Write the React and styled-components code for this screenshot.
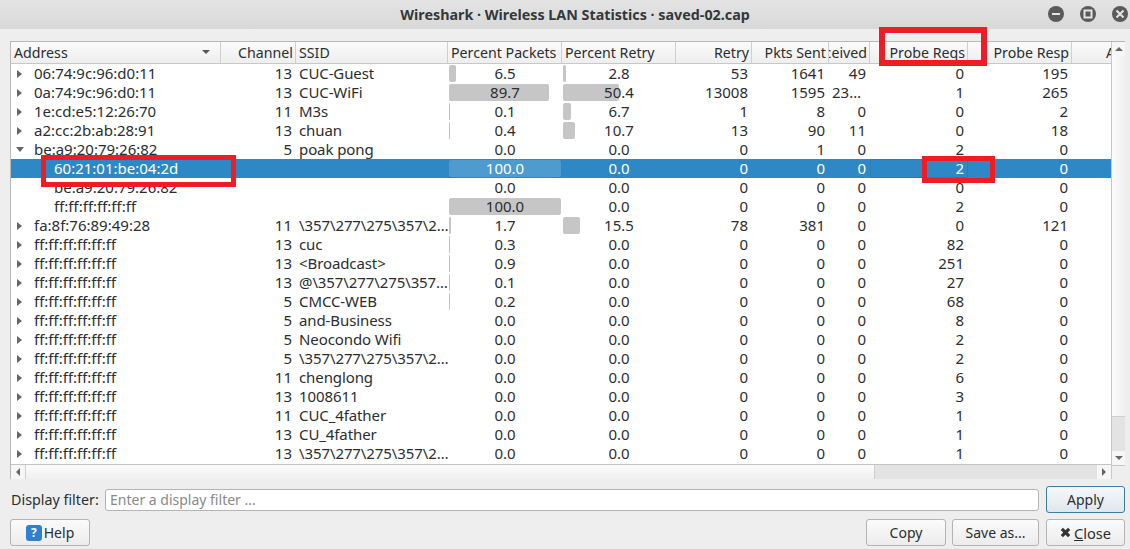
import React from 'react'
import styled, { createGlobalStyle } from 'styled-components'

const GRID = '210px 75px 152px 114px 114px 76px 77px 41px 98px 104px 39px'

const GlobalStyle = createGlobalStyle`
  html, body { margin: 0; padding: 0; background: #eeeeee; }
  body { font-family: "Noto Sans", "Open Sans", sans-serif; font-size: 14px; color: #2b2e30; overflow: hidden; }
`

const Win = styled.div`
  position: relative;
  width: 1130px;
  height: 549px;
  overflow: hidden;
  background: #eeeeee;
`

const TitleBar = styled.div`
  position: relative;
  height: 29px;
  display: flex;
  align-items: center;
  justify-content: center;
  padding-left: 20px;
  box-sizing: border-box;
  background: linear-gradient(#e4e4e4, #d8d8d8);
  font-weight: 700;
  font-size: 14.3px;
  color: #33383a;
`

const WinButtons = styled.div`
  position: absolute;
  top: 5px;
  right: 1px;
  display: flex;
  gap: 14px;
`

const Content = styled.div`
  padding: 12px 5px 0 10px;
`

const Table = styled.div`
  display: grid;
  grid-template-columns: 1100px 14px;
  grid-template-rows: 423px 14px;
  border: 1px solid #b8b8b8;
  background: #fff;
  box-sizing: border-box;
  height: 438px;
`

const Main = styled.div`
  overflow: hidden;
  border-bottom: 1px solid #c4c4c4;
`

const Header = styled.div`
  display: grid;
  grid-template-columns: ${GRID};
  height: 21px;
  background: linear-gradient(#fbfbfb, #eeeeee);
  border-bottom: 1px solid #c8c8c8;
  font-size: 14.2px;
`

const HCell = styled.div`
  position: relative;
  display: flex;
  align-items: center;
  justify-content: ${p => p.$align === 'right' ? 'flex-end' : 'flex-start'};
  padding: 0 2px 0 3px;
  overflow: hidden;
  white-space: nowrap;
  border-right: 1px solid #cfcfcf;
  min-width: 0;
`

const ClippedHCell = styled(HCell)`
  padding-left: 34px;
  border-right: none;
`

const SortArrow = styled.span`
  position: absolute;
  right: 10px;
  top: 8px;
  border-left: 4px solid transparent;
  border-right: 4px solid transparent;
  border-top: 4px solid #555;
`

const Row = styled.div`
  display: grid;
  grid-template-columns: ${GRID};
  height: 19px;
  line-height: 19px;
  font-size: 15px;
  background: ${p => p.$selected ? '#2e88c5' : '#fff'};
  color: ${p => p.$selected ? '#fff' : '#2b2e30'};
`

const Cell = styled.div`
  position: relative;
  padding: 0 4px 0 3px;
  overflow: hidden;
  white-space: nowrap;
  text-align: ${p => p.$align || 'left'};
  min-width: 0;
`

const AddressCell = styled(Cell)`
  padding-left: ${p => p.$child ? '43px' : '23px'};
`

const SsidCell = styled(Cell)`
  padding-right: 0;
  letter-spacing: -0.1px;
`

const Expander = styled.span`
  position: absolute;
  left: 6px;
  top: 6px;
  width: 0;
  height: 0;
  ${p => p.$open
    ? 'border-left: 4px solid transparent; border-right: 4px solid transparent; border-top: 5px solid #666; top: 7px; left: 5px;'
    : 'border-top: 4px solid transparent; border-bottom: 4px solid transparent; border-left: 5px solid #666;'}
`

const BarCell = styled(Cell)`
  padding: 0;
  text-align: center;
`

const Bar = styled.div`
  position: absolute;
  left: 1px;
  top: 1px;
  bottom: 1px;
  border-radius: 2px;
  background: ${p => p.$selected ? '#4e9bcf' : '#c6c6c6'};
`

const BarLabel = styled.span`
  position: relative;
`

const FocusCell = styled(Cell)`
  box-shadow: inset 0 0 0 1px #2a7db6;
`

const VBar = styled.div`
  display: flex;
  flex-direction: column;
  border-left: 1px solid #c8c8c8;
  background: #e3e3e3;
`

const VThumb = styled.div`
  height: 360px;
  background: linear-gradient(90deg, #fbfbfb, #f0f0f0);
  border-bottom: 1px solid #cfcfcf;
`

const Spacer = styled.div`
  flex: 1;
`

const ArrowBox = styled.div`
  display: flex;
  align-items: center;
  justify-content: center;
  height: 14px;
  width: ${p => p.$w || 'auto'};
  flex: none;
  background: #f6f6f6;
`

const Tri = styled.span`
  width: 0;
  height: 0;
  ${p => p.$dir === 'up' && 'border-left: 4px solid transparent; border-right: 4px solid transparent; border-bottom: 4px solid #666;'}
  ${p => p.$dir === 'down' && 'border-left: 4px solid transparent; border-right: 4px solid transparent; border-top: 4px solid #666;'}
  ${p => p.$dir === 'left' && 'border-top: 4px solid transparent; border-bottom: 4px solid transparent; border-right: 4px solid #666;'}
  ${p => p.$dir === 'right' && 'border-top: 4px solid transparent; border-bottom: 4px solid transparent; border-left: 4px solid #666;'}
`

const HBar = styled.div`
  display: flex;
  background: #e3e3e3;
`

const HThumb = styled.div`
  width: 848px;
  background: linear-gradient(#fbfbfb, #f0f0f0);
  border-left: 1px solid #cfcfcf;
  border-right: 1px solid #cfcfcf;
`

const Corner = styled.div`
  background: #eeeeee;
  border-left: 1px solid #c8c8c8;
  border-top: 1px solid #c8c8c8;
`

const FilterRow = styled.div`
  display: flex;
  align-items: center;
  height: 27px;
  margin-top: 7px;
  padding-left: 1px;
`

const FilterLabel = styled.label`
  width: 94px;
  flex: none;
  font-size: 14.3px;
`

const FilterInput = styled.input`
  width: 934px;
  height: 22px;
  box-sizing: border-box;
  border: 1px solid #b4b4b4;
  border-radius: 3px;
  background: #fff;
  padding: 0 4px;
  margin-right: 7px;
  font: inherit;
  outline: none;
  &::placeholder { color: #8a8a8a; opacity: 1; }
`

const Button = styled.button`
  width: ${p => p.$w}px;
  height: 27px;
  box-sizing: border-box;
  flex: none;
  display: inline-flex;
  align-items: center;
  justify-content: center;
  gap: 2px;
  padding: 0;
  font: inherit;
  color: #2b2e30;
  border: 1px solid ${p => p.$primary ? '#3a7ea8' : '#b4b4b4'};
  border-radius: 3px;
  background: ${p => p.$primary ? 'linear-gradient(#f6f8f9, #dfe7ec)' : 'linear-gradient(#fbfbfb, #ececec)'};
`

const CloseButton = styled(Button)`
  margin-left: 1px;
  gap: 3px;
  font-size: 14.6px;
`

const Footer = styled.div`
  display: flex;
  margin-top: 6px;
`

const FooterRight = styled.div`
  margin-left: auto;
  display: flex;
  gap: 6px;
`

const HelpIcon = styled.span`
  width: 16px;
  height: 16px;
  border-radius: 3px;
  background: #2f80d0;
  color: #fff;
  font-weight: 700;
  font-size: 12px;
  line-height: 16px;
  text-align: center;
`

const Mnemonic = styled.span`
  text-decoration: underline;
`

const RedBox = styled.div`
  position: absolute;
  left: ${p => p.$x}px;
  top: ${p => p.$y}px;
  width: ${p => p.$w}px;
  height: ${p => p.$h}px;
  box-sizing: border-box;
  border: ${p => p.$t || 5}px solid #ee1c25;
  pointer-events: none;
`

const rows = [
  { a: '06:74:9c:96:d0:11', c: '13', s: 'CUC-Guest', p: 6.5, r: 2.8, v: ['53', '1641', '49', '0', '195'], kids: 'closed' },
  { a: '0a:74:9c:96:d0:11', c: '13', s: 'CUC-WiFi', p: 89.7, r: 50.4, v: ['13008', '1595', '23…', '1', '265'], kids: 'closed' },
  { a: '1e:cd:e5:12:26:70', c: '11', s: 'M3s', p: 0.1, r: 6.7, v: ['1', '8', '0', '0', '2'], kids: 'closed' },
  { a: 'a2:cc:2b:ab:28:91', c: '13', s: 'chuan', p: 0.4, r: 10.7, v: ['13', '90', '11', '0', '18'], kids: 'closed' },
  { a: 'be:a9:20:79:26:82', c: '5', s: 'poak pong', p: 0, r: 0, v: ['0', '1', '0', '2', '0'], kids: 'open' },
  { a: '60:21:01:be:04:2d', child: true, selected: true, p: 100, r: 0, v: ['0', '0', '0', '2', '0'] },
  { a: 'be:a9:20:79:26:82', child: true, p: 0, r: 0, v: ['0', '0', '0', '0', '0'] },
  { a: 'ff:ff:ff:ff:ff:ff', child: true, p: 100, r: 0, v: ['0', '0', '0', '2', '0'] },
  { a: 'fa:8f:76:89:49:28', c: '11', s: '\\357\\277\\275\\357\\2…', p: 1.7, r: 15.5, v: ['78', '381', '0', '0', '121'], kids: 'closed' },
  { a: 'ff:ff:ff:ff:ff:ff', c: '13', s: 'cuc', p: 0.3, r: 0, v: ['0', '0', '0', '82', '0'], kids: 'closed' },
  { a: 'ff:ff:ff:ff:ff:ff', c: '13', s: '<Broadcast>', p: 0.9, r: 0, v: ['0', '0', '0', '251', '0'], kids: 'closed' },
  { a: 'ff:ff:ff:ff:ff:ff', c: '13', s: '@\\357\\277\\275\\357…', p: 0.1, r: 0, v: ['0', '0', '0', '27', '0'], kids: 'closed' },
  { a: 'ff:ff:ff:ff:ff:ff', c: '5', s: 'CMCC-WEB', p: 0.2, r: 0, v: ['0', '0', '0', '68', '0'], kids: 'closed' },
  { a: 'ff:ff:ff:ff:ff:ff', c: '5', s: 'and-Business', p: 0, r: 0, v: ['0', '0', '0', '8', '0'], kids: 'closed' },
  { a: 'ff:ff:ff:ff:ff:ff', c: '5', s: 'Neocondo Wifi', p: 0, r: 0, v: ['0', '0', '0', '2', '0'], kids: 'closed' },
  { a: 'ff:ff:ff:ff:ff:ff', c: '5', s: '\\357\\277\\275\\357\\2…', p: 0, r: 0, v: ['0', '0', '0', '2', '0'], kids: 'closed' },
  { a: 'ff:ff:ff:ff:ff:ff', c: '11', s: 'chenglong', p: 0, r: 0, v: ['0', '0', '0', '6', '0'], kids: 'closed' },
  { a: 'ff:ff:ff:ff:ff:ff', c: '13', s: '1008611', p: 0, r: 0, v: ['0', '0', '0', '3', '0'], kids: 'closed' },
  { a: 'ff:ff:ff:ff:ff:ff', c: '11', s: 'CUC_4father', p: 0, r: 0, v: ['0', '0', '0', '1', '0'], kids: 'closed' },
  { a: 'ff:ff:ff:ff:ff:ff', c: '13', s: 'CU_4father', p: 0, r: 0, v: ['0', '0', '0', '1', '0'], kids: 'closed' },
  { a: 'ff:ff:ff:ff:ff:ff', c: '13', s: '\\357\\277\\275\\357\\2…', p: 0, r: 0, v: ['0', '0', '0', '1', '0'], kids: 'closed' },
]

const WinIcon = ({ kind }) => (
  <svg width="18" height="18" viewBox="0 0 18 18">
    <circle cx="9" cy="9" r="8" fill="#5a5a5a" />
    {kind === 'min' && <rect x="5" y="8" width="8" height="2" fill="#e4e4e4" />}
    {kind === 'max' && <rect x="5.5" y="5.5" width="7" height="7" fill="none" stroke="#e4e4e4" strokeWidth="2" />}
    {kind === 'close' && <path d="M5.5 5.5l7 7M12.5 5.5l-7 7" stroke="#e4e4e4" strokeWidth="2" />}
  </svg>
)

const PercentCell = ({ value, selected }) => (
  <BarCell>
    {value > 0 && <Bar $selected={selected} style={{ width: `${Math.max(value * 1.12, 1)}px` }} />}
    <BarLabel>{value.toFixed(1)}</BarLabel>
  </BarCell>
)

const App = () => (
  <Win>
    <GlobalStyle />
    <TitleBar>
      Wireshark · Wireless LAN Statistics · saved-02.cap
      <WinButtons>
        <WinIcon kind="min" />
        <WinIcon kind="max" />
        <WinIcon kind="close" />
      </WinButtons>
    </TitleBar>
    <Content>
      <Table>
        <Main>
          <Header>
            <HCell>
              Address
              <SortArrow />
            </HCell>
            <HCell $align="right">Channel</HCell>
            <HCell>SSID</HCell>
            <HCell>Percent Packets</HCell>
            <HCell>Percent Retry</HCell>
            <HCell $align="right">Retry</HCell>
            <HCell $align="right">Pkts Sent</HCell>
            <HCell $align="right">Pkts Received</HCell>
            <HCell $align="right">Probe Reqs</HCell>
            <HCell $align="right">Probe Resp</HCell>
            <ClippedHCell>Auths</ClippedHCell>
          </Header>
          {rows.map((r, i) => (
            <Row key={i} $selected={r.selected}>
              <AddressCell $child={r.child}>
                {r.kids && <Expander $open={r.kids === 'open'} />}
                {r.a}
              </AddressCell>
              <Cell $align="right">{r.c}</Cell>
              <SsidCell>{r.s}</SsidCell>
              <PercentCell value={r.p} selected={r.selected} />
              <PercentCell value={r.r} selected={r.selected} />
              <Cell $align="right">{r.v[0]}</Cell>
              <Cell $align="right">{r.v[1]}</Cell>
              <Cell $align={r.v[2].length > 2 ? 'left' : 'right'}>{r.v[2]}</Cell>
              {r.selected
                ? <FocusCell $align="right">{r.v[3]}</FocusCell>
                : <Cell $align="right">{r.v[3]}</Cell>}
              <Cell $align="right">{r.v[4]}</Cell>
              <Cell />
            </Row>
          ))}
        </Main>
        <VBar>
          <ArrowBox><Tri $dir="up" /></ArrowBox>
          <VThumb />
          <Spacer />
          <ArrowBox><Tri $dir="down" /></ArrowBox>
        </VBar>
        <HBar>
          <ArrowBox $w="14px"><Tri $dir="left" /></ArrowBox>
          <HThumb />
          <Spacer />
          <ArrowBox $w="14px"><Tri $dir="right" /></ArrowBox>
        </HBar>
        <Corner />
      </Table>
      <FilterRow>
        <FilterLabel>Display filter:</FilterLabel>
        <FilterInput placeholder="Enter a display filter ..." />
        <Button $w={79} $primary>Apply</Button>
      </FilterRow>
      <Footer>
        <Button $w={80}>
          <HelpIcon>?</HelpIcon>
          Help
        </Button>
        <FooterRight>
          <Button $w={80}>Copy</Button>
          <Button $w={87}>Save as...</Button>
          <CloseButton $w={79}>
            <svg width="11" height="11" viewBox="0 0 12 12">
              <path d="M2 2l8 8M10 2l-8 8" stroke="#333" strokeWidth="3.4" />
            </svg>
            <span><Mnemonic>C</Mnemonic>lose</span>
          </CloseButton>
        </FooterRight>
      </Footer>
    </Content>
    <RedBox $x={879} $y={27} $w={108} $h={39} $t={6} />
    <RedBox $x={41} $y={155} $w={195} $h={32} />
    <RedBox $x={922} $y={156} $w={73} $h={27} />
  </Win>
)

export default App
